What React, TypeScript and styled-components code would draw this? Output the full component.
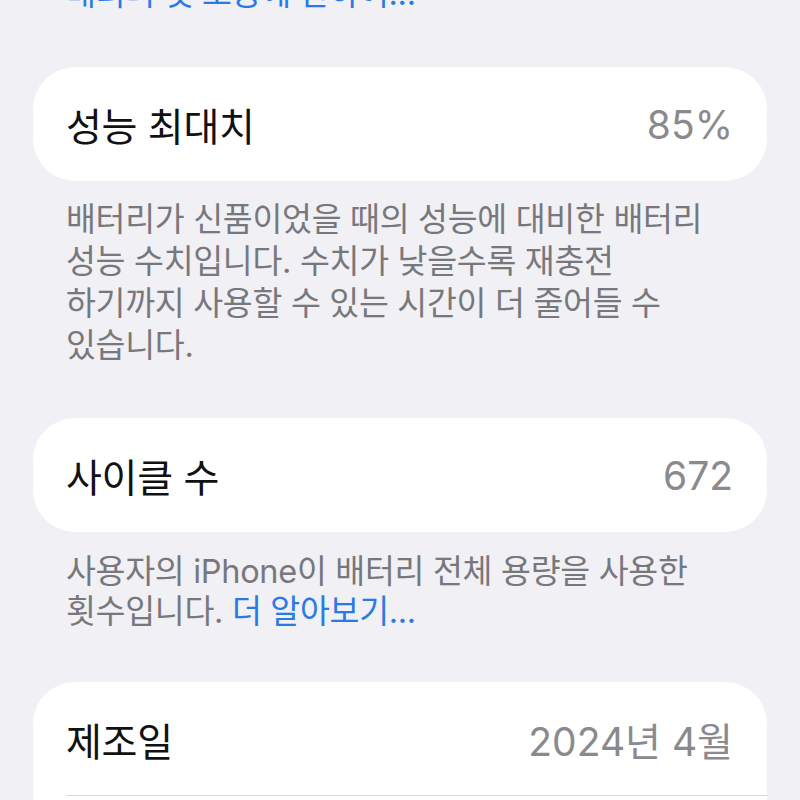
import React from "react";
import styled, { createGlobalStyle } from "styled-components";

const GlobalStyle = createGlobalStyle`
  html, body {
    margin: 0;
    padding: 0;
    background: #f0f0f5;
    overflow: hidden;
  }
  body {
    font-family: Inter, "Noto Sans CJK KR", sans-serif;
    -webkit-font-smoothing: antialiased;
  }
`;

const Page = styled.div`
  width: 800px;
  height: 800px;
  overflow: hidden;
  background: #f0f0f5;
  padding: 0 33px;
  box-sizing: border-box;
`;

const Scroller = styled.div`
  margin-top: -27px;
  display: flex;
  flex-direction: column;
`;

const Card = styled.div`
  background: #ffffff;
  border-radius: 42px;
  overflow: hidden;
  padding-bottom: 60px;

  &:not(:last-child) {
    padding-bottom: 0;
  }
`;

const Row = styled.div<{ $divider?: boolean }>`
  height: 114px;
  display: flex;
  align-items: center;
  justify-content: space-between;
  padding: 0 34px 0 33px;
  position: relative;

  &::after {
    content: "";
    display: ${(p) => (p.$divider ? "block" : "none")};
    position: absolute;
    left: 33px;
    right: 0;
    bottom: 0;
    height: 1px;
    background: #d6d6db;
  }
`;

const Label = styled.span`
  font-size: 39px;
  color: #111111;
  letter-spacing: -0.3px;
`;

const Value = styled.span`
  font-size: 39px;
  color: #8a8a8e;
  letter-spacing: 0px;
`;

const Footnote = styled.p<{ $top: number; $bottom: number; $lh: number }>`
  margin: ${(p) => p.$top}px 0 ${(p) => p.$bottom}px;
  padding: 0 33px;
  font-size: 32.5px;
  line-height: ${(p) => p.$lh}px;
  color: #77777c;
  letter-spacing: -0.3px;
`;

const Link = styled.span`
  color: #2a7ae6;
`;

export default function App() {
  return (
    <>
      <GlobalStyle />
      <Page>
        <Scroller>
          <Footnote $top={0} $bottom={52} $lh={42}>
            <Link>배터리 및 보증에 관하여...</Link>
          </Footnote>

          <Card>
            <Row>
              <Label>성능 최대치</Label>
              <Value>85%</Value>
            </Row>
          </Card>
          <Footnote $top={18} $bottom={51} $lh={42}>
            배터리가 신품이었을 때의 성능에 대비한 배터리
            <br />
            성능 수치입니다. 수치가 낮을수록 재충전
            <br />
            하기까지 사용할 수 있는 시간이 더 줄어들 수
            <br />
            있습니다.
          </Footnote>

          <Card>
            <Row>
              <Label>사이클 수</Label>
              <Value>672</Value>
            </Row>
          </Card>
          <Footnote $top={20} $bottom={50} $lh={40}>
            사용자의 iPhone이 배터리 전체 용량을 사용한
            <br />
            횟수입니다. <Link>더 알아보기...</Link>
          </Footnote>

          <Card>
            <Row $divider>
              <Label>제조일</Label>
              <Value>2024년 4월</Value>
            </Row>
          </Card>
        </Scroller>
      </Page>
    </>
  );
}
